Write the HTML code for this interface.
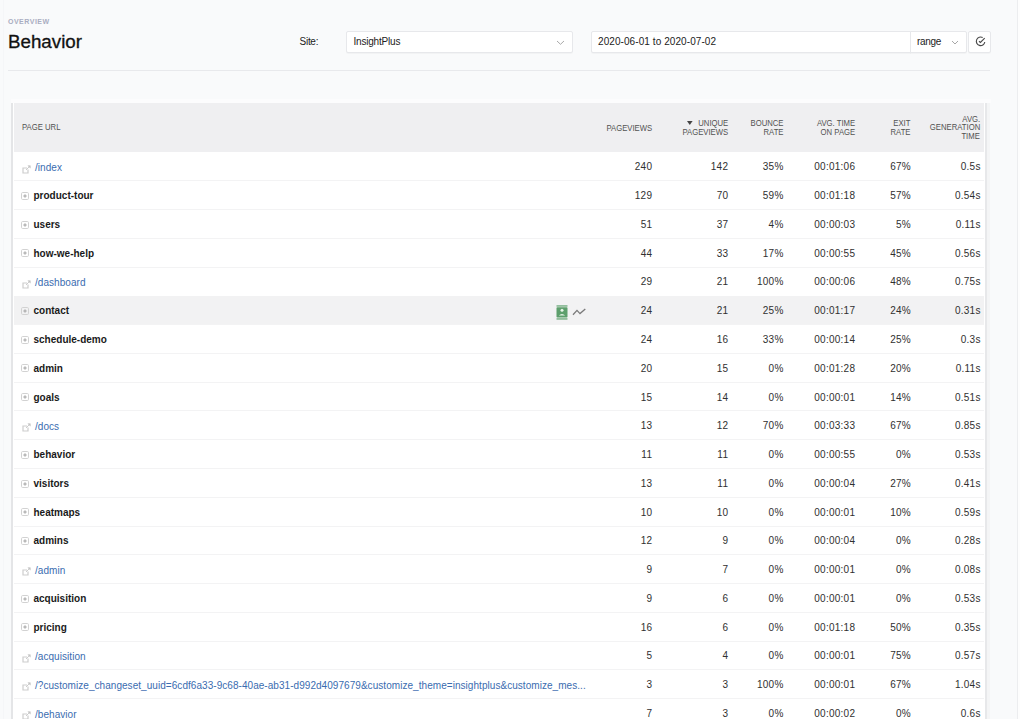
<!DOCTYPE html><html><head><meta charset="utf-8"><style>
*{margin:0;padding:0;box-sizing:border-box}
html,body{width:1020px;height:719px;overflow:hidden;background:#f9fafb;font-family:"Liberation Sans",sans-serif}
.t{position:absolute;white-space:nowrap}
.b{position:absolute}
</style></head><body>
<div class="b" style="left:3px;top:0;width:1px;height:719px;background:#f5f6f8"></div>
<div class="b" style="left:1017px;top:0;width:1px;height:719px;background:#ecedef"></div>
<div class="b" style="left:1018px;top:0;width:2px;height:719px;background:#fdfdfd"></div>
<div class="t" style="left:8.00px;top:18.00px;font-size:7px;line-height:8.40px;color:#a9adc1;font-weight:700;letter-spacing:0.5px;">OVERVIEW</div>
<div class="t" style="left:8.00px;top:31.00px;font-size:18.75px;line-height:22.50px;color:#111;font-weight:400;-webkit-text-stroke:0.3px #111;">Behavior</div>
<div class="t" style="left:299.60px;top:36.20px;font-size:10px;line-height:12.00px;color:#222;font-weight:400;letter-spacing:-0.3px;">Site:</div>
<div class="b" style="left:346px;top:31px;width:227px;height:21.5px;background:#fff;border:1px solid #e7e8eb;border-radius:2px;box-shadow:0 1px 1px rgba(0,0,0,0.03);"></div>
<div class="t" style="left:353.50px;top:36.20px;font-size:10px;line-height:12.00px;color:#222;font-weight:400;letter-spacing:-0.2px;">InsightPlus</div>
<svg class="b" style="left:555.8px;top:40.2px" width="9" height="5.3" viewBox="-1 -1 9 5.3"><path d="M0 0 L3.5 3.3 L7 0" fill="none" stroke="#a8a8a8" stroke-width="1"/></svg>
<div class="b" style="left:591px;top:31px;width:320px;height:21.5px;background:#fff;border:1px solid #e7e8eb;border-radius:2px;box-shadow:0 1px 1px rgba(0,0,0,0.03);border-radius:2px 0 0 2px"></div>
<div class="t" style="left:598.00px;top:36.20px;font-size:10px;line-height:12.00px;color:#222;font-weight:400;letter-spacing:0.08px;">2020-06-01 to 2020-07-02</div>
<div class="b" style="left:910px;top:31px;width:57px;height:21.5px;background:#fff;border:1px solid #e7e8eb;border-radius:2px;box-shadow:0 1px 1px rgba(0,0,0,0.03);border-radius:0 2px 2px 0"></div>
<div class="t" style="left:917.00px;top:36.20px;font-size:10px;line-height:12.00px;color:#222;font-weight:400;letter-spacing:-0.3px;">range</div>
<svg class="b" style="left:951px;top:40.4px" width="8" height="5" viewBox="-1 -1 8 5"><path d="M0 0 L3.0 3 L6 0" fill="none" stroke="#a8a8a8" stroke-width="1"/></svg>
<div class="b" style="left:967.5px;top:31px;width:23.5px;height:21.5px;background:#fff;border:1px solid #e7e8eb;border-radius:2px;box-shadow:0 1px 1px rgba(0,0,0,0.03);"></div>
<svg class="b" style="left:974.6px;top:36px" width="11" height="11" viewBox="0 0 11 11"><path d="M9.8 6.0 A4.25 4.25 0 1 1 7.7 1.6" fill="none" stroke="#4a4a4a" stroke-width="1.15"/><path d="M4.0 5.2 L5.4 6.4 L9.7 2.05" fill="none" stroke="#4a4a4a" stroke-width="1.15"/></svg>
<div class="b" style="left:8px;top:70px;width:982px;height:1px;background:#e8e9ec"></div>
<div class="b" style="left:11px;top:99px;width:979.5px;height:4px;background:#fcfcfd"></div>
<div class="b" style="left:11px;top:102.5px;width:976.5px;height:616.5px;background:#fff"></div>
<div class="b" style="left:11px;top:102.5px;width:2px;height:616.5px;background:#e4e5e7"></div>
<div class="b" style="left:985px;top:102.5px;width:2px;height:616.5px;background:#e7e8ea"></div>
<div class="b" style="left:987px;top:102.5px;width:3px;height:616.5px;background:#f4f5f6"></div>
<div class="b" style="left:14px;top:102.5px;width:970px;height:49.5px;background:#efeff1"></div>
<div class="t" style="left:22.20px;top:123.40px;font-size:8.3px;line-height:9.96px;color:#525252;font-weight:400;transform:scaleX(0.93);transform-origin:0 0;">PAGE URL</div>
<div class="t" style="right:368.00px;text-align:right;top:123.70px;font-size:8.3px;line-height:9.96px;color:#525252;font-weight:400;transform:scaleX(0.93);transform-origin:100% 0;">PAGEVIEWS</div>
<div class="t" style="right:292.00px;text-align:right;top:119.20px;font-size:8.3px;line-height:9.96px;color:#525252;font-weight:400;transform:scaleX(0.93);transform-origin:100% 0;">UNIQUE</div>
<div class="t" style="right:292.00px;text-align:right;top:127.80px;font-size:8.3px;line-height:9.96px;color:#525252;font-weight:400;transform:scaleX(0.93);transform-origin:100% 0;">PAGEVIEWS</div>
<svg class="b" style="left:686.8px;top:121px" width="6" height="5" viewBox="0 0 6 5"><path d="M0 0 L5.6 0 L2.8 3.9 Z" fill="#444"/></svg>
<div class="t" style="right:236.70px;text-align:right;top:119.20px;font-size:8.3px;line-height:9.96px;color:#525252;font-weight:400;transform:scaleX(0.93);transform-origin:100% 0;">BOUNCE</div>
<div class="t" style="right:236.70px;text-align:right;top:127.80px;font-size:8.3px;line-height:9.96px;color:#525252;font-weight:400;transform:scaleX(0.93);transform-origin:100% 0;">RATE</div>
<div class="t" style="right:165.00px;text-align:right;top:119.40px;font-size:8.3px;line-height:9.96px;color:#525252;font-weight:400;transform:scaleX(0.93);transform-origin:100% 0;">AVG. TIME</div>
<div class="t" style="right:165.00px;text-align:right;top:127.80px;font-size:8.3px;line-height:9.96px;color:#525252;font-weight:400;transform:scaleX(0.93);transform-origin:100% 0;">ON PAGE</div>
<div class="t" style="right:109.50px;text-align:right;top:119.40px;font-size:8.3px;line-height:9.96px;color:#525252;font-weight:400;transform:scaleX(0.93);transform-origin:100% 0;">EXIT</div>
<div class="t" style="right:109.50px;text-align:right;top:127.80px;font-size:8.3px;line-height:9.96px;color:#525252;font-weight:400;transform:scaleX(0.93);transform-origin:100% 0;">RATE</div>
<div class="t" style="right:39.80px;text-align:right;top:114.80px;font-size:8.3px;line-height:9.96px;color:#525252;font-weight:400;transform:scaleX(0.93);transform-origin:100% 0;">AVG.</div>
<div class="t" style="right:39.80px;text-align:right;top:123.30px;font-size:8.3px;line-height:9.96px;color:#525252;font-weight:400;transform:scaleX(0.93);transform-origin:100% 0;">GENERATION</div>
<div class="t" style="right:39.80px;text-align:right;top:131.90px;font-size:8.3px;line-height:9.96px;color:#525252;font-weight:400;transform:scaleX(0.93);transform-origin:100% 0;">TIME</div>
<svg class="b" style="left:22px;top:164.5px" width="9" height="9" viewBox="0 0 9 9"><path d="M5 3 H1 V8 H6 V4.5" fill="none" stroke="#cdcdcd" stroke-width="1.2"/><path d="M5.5 0.5 H8.5 V3.5 Z" fill="#b5b5b5"/><path d="M4 5 L7.6 1.4" stroke="#cdcdcd" stroke-width="1"/></svg>
<div class="t" style="left:35.00px;top:162.00px;font-size:10px;line-height:12.00px;color:#3a6cb0;font-weight:400;letter-spacing:0.05px;">/index</div>
<div class="t" style="right:367.75px;text-align:right;top:161.40px;font-size:10px;line-height:12.00px;color:#303030;font-weight:400;letter-spacing:0.25px;">240</div>
<div class="t" style="right:291.75px;text-align:right;top:161.40px;font-size:10px;line-height:12.00px;color:#303030;font-weight:400;letter-spacing:0.25px;">142</div>
<div class="t" style="right:236.45px;text-align:right;top:161.40px;font-size:10px;line-height:12.00px;color:#303030;font-weight:400;letter-spacing:0.25px;">35%</div>
<div class="t" style="right:164.75px;text-align:right;top:161.40px;font-size:10px;line-height:12.00px;color:#303030;font-weight:400;letter-spacing:0.25px;">00:01:06</div>
<div class="t" style="right:109.05px;text-align:right;top:161.40px;font-size:10px;line-height:12.00px;color:#303030;font-weight:400;letter-spacing:0.25px;">67%</div>
<div class="t" style="right:39.35px;text-align:right;top:161.40px;font-size:10px;line-height:12.00px;color:#303030;font-weight:400;letter-spacing:0.25px;">0.5s</div>
<div class="b" style="left:14px;top:180.27px;width:970px;height:1px;background:#f3f3f4"></div>
<svg class="b" style="left:21.3px;top:191.87px" width="8" height="8" viewBox="0 0 8 8"><rect x="0.5" y="0.5" width="7" height="7" rx="1.2" fill="none" stroke="#d2d2d2" stroke-width="1"/><path d="M4 2 V6 M2 4 H6" stroke="#b0b0b0" stroke-width="0.8"/><circle cx="4" cy="4" r="0.7" fill="#999"/></svg>
<div class="t" style="left:33.50px;top:190.17px;font-size:10px;line-height:12.00px;color:#1a1a1a;font-weight:700;">product-tour</div>
<div class="t" style="right:367.75px;text-align:right;top:190.17px;font-size:10px;line-height:12.00px;color:#303030;font-weight:400;letter-spacing:0.25px;">129</div>
<div class="t" style="right:291.75px;text-align:right;top:190.17px;font-size:10px;line-height:12.00px;color:#303030;font-weight:400;letter-spacing:0.25px;">70</div>
<div class="t" style="right:236.45px;text-align:right;top:190.17px;font-size:10px;line-height:12.00px;color:#303030;font-weight:400;letter-spacing:0.25px;">59%</div>
<div class="t" style="right:164.75px;text-align:right;top:190.17px;font-size:10px;line-height:12.00px;color:#303030;font-weight:400;letter-spacing:0.25px;">00:01:18</div>
<div class="t" style="right:109.05px;text-align:right;top:190.17px;font-size:10px;line-height:12.00px;color:#303030;font-weight:400;letter-spacing:0.25px;">57%</div>
<div class="t" style="right:39.35px;text-align:right;top:190.17px;font-size:10px;line-height:12.00px;color:#303030;font-weight:400;letter-spacing:0.25px;">0.54s</div>
<div class="b" style="left:14px;top:209.04px;width:970px;height:1px;background:#f3f3f4"></div>
<svg class="b" style="left:21.3px;top:220.64px" width="8" height="8" viewBox="0 0 8 8"><rect x="0.5" y="0.5" width="7" height="7" rx="1.2" fill="none" stroke="#d2d2d2" stroke-width="1"/><path d="M4 2 V6 M2 4 H6" stroke="#b0b0b0" stroke-width="0.8"/><circle cx="4" cy="4" r="0.7" fill="#999"/></svg>
<div class="t" style="left:33.50px;top:218.94px;font-size:10px;line-height:12.00px;color:#1a1a1a;font-weight:700;">users</div>
<div class="t" style="right:367.75px;text-align:right;top:218.94px;font-size:10px;line-height:12.00px;color:#303030;font-weight:400;letter-spacing:0.25px;">51</div>
<div class="t" style="right:291.75px;text-align:right;top:218.94px;font-size:10px;line-height:12.00px;color:#303030;font-weight:400;letter-spacing:0.25px;">37</div>
<div class="t" style="right:236.45px;text-align:right;top:218.94px;font-size:10px;line-height:12.00px;color:#303030;font-weight:400;letter-spacing:0.25px;">4%</div>
<div class="t" style="right:164.75px;text-align:right;top:218.94px;font-size:10px;line-height:12.00px;color:#303030;font-weight:400;letter-spacing:0.25px;">00:00:03</div>
<div class="t" style="right:109.05px;text-align:right;top:218.94px;font-size:10px;line-height:12.00px;color:#303030;font-weight:400;letter-spacing:0.25px;">5%</div>
<div class="t" style="right:39.35px;text-align:right;top:218.94px;font-size:10px;line-height:12.00px;color:#303030;font-weight:400;letter-spacing:0.25px;">0.11s</div>
<div class="b" style="left:14px;top:237.81px;width:970px;height:1px;background:#f3f3f4"></div>
<svg class="b" style="left:21.3px;top:249.41px" width="8" height="8" viewBox="0 0 8 8"><rect x="0.5" y="0.5" width="7" height="7" rx="1.2" fill="none" stroke="#d2d2d2" stroke-width="1"/><path d="M4 2 V6 M2 4 H6" stroke="#b0b0b0" stroke-width="0.8"/><circle cx="4" cy="4" r="0.7" fill="#999"/></svg>
<div class="t" style="left:33.50px;top:247.71px;font-size:10px;line-height:12.00px;color:#1a1a1a;font-weight:700;">how-we-help</div>
<div class="t" style="right:367.75px;text-align:right;top:247.71px;font-size:10px;line-height:12.00px;color:#303030;font-weight:400;letter-spacing:0.25px;">44</div>
<div class="t" style="right:291.75px;text-align:right;top:247.71px;font-size:10px;line-height:12.00px;color:#303030;font-weight:400;letter-spacing:0.25px;">33</div>
<div class="t" style="right:236.45px;text-align:right;top:247.71px;font-size:10px;line-height:12.00px;color:#303030;font-weight:400;letter-spacing:0.25px;">17%</div>
<div class="t" style="right:164.75px;text-align:right;top:247.71px;font-size:10px;line-height:12.00px;color:#303030;font-weight:400;letter-spacing:0.25px;">00:00:55</div>
<div class="t" style="right:109.05px;text-align:right;top:247.71px;font-size:10px;line-height:12.00px;color:#303030;font-weight:400;letter-spacing:0.25px;">45%</div>
<div class="t" style="right:39.35px;text-align:right;top:247.71px;font-size:10px;line-height:12.00px;color:#303030;font-weight:400;letter-spacing:0.25px;">0.56s</div>
<div class="b" style="left:14px;top:266.58px;width:970px;height:1px;background:#f3f3f4"></div>
<svg class="b" style="left:22px;top:279.58px" width="9" height="9" viewBox="0 0 9 9"><path d="M5 3 H1 V8 H6 V4.5" fill="none" stroke="#cdcdcd" stroke-width="1.2"/><path d="M5.5 0.5 H8.5 V3.5 Z" fill="#b5b5b5"/><path d="M4 5 L7.6 1.4" stroke="#cdcdcd" stroke-width="1"/></svg>
<div class="t" style="left:35.00px;top:277.08px;font-size:10px;line-height:12.00px;color:#3a6cb0;font-weight:400;letter-spacing:0.05px;">/dashboard</div>
<div class="t" style="right:367.75px;text-align:right;top:276.48px;font-size:10px;line-height:12.00px;color:#303030;font-weight:400;letter-spacing:0.25px;">29</div>
<div class="t" style="right:291.75px;text-align:right;top:276.48px;font-size:10px;line-height:12.00px;color:#303030;font-weight:400;letter-spacing:0.25px;">21</div>
<div class="t" style="right:236.45px;text-align:right;top:276.48px;font-size:10px;line-height:12.00px;color:#303030;font-weight:400;letter-spacing:0.25px;">100%</div>
<div class="t" style="right:164.75px;text-align:right;top:276.48px;font-size:10px;line-height:12.00px;color:#303030;font-weight:400;letter-spacing:0.25px;">00:00:06</div>
<div class="t" style="right:109.05px;text-align:right;top:276.48px;font-size:10px;line-height:12.00px;color:#303030;font-weight:400;letter-spacing:0.25px;">48%</div>
<div class="t" style="right:39.35px;text-align:right;top:276.48px;font-size:10px;line-height:12.00px;color:#303030;font-weight:400;letter-spacing:0.25px;">0.75s</div>
<div class="b" style="left:14px;top:295.85px;width:970px;height:28.77px;background:#f2f2f3"></div>
<svg class="b" style="left:21.3px;top:306.95000000000005px" width="8" height="8" viewBox="0 0 8 8"><rect x="0.5" y="0.5" width="7" height="7" rx="1.2" fill="none" stroke="#d2d2d2" stroke-width="1"/><path d="M4 2 V6 M2 4 H6" stroke="#b0b0b0" stroke-width="0.8"/><circle cx="4" cy="4" r="0.7" fill="#999"/></svg>
<div class="t" style="left:33.50px;top:305.25px;font-size:10px;line-height:12.00px;color:#1a1a1a;font-weight:700;">contact</div>
<div class="t" style="right:367.75px;text-align:right;top:305.25px;font-size:10px;line-height:12.00px;color:#303030;font-weight:400;letter-spacing:0.25px;">24</div>
<div class="t" style="right:291.75px;text-align:right;top:305.25px;font-size:10px;line-height:12.00px;color:#303030;font-weight:400;letter-spacing:0.25px;">21</div>
<div class="t" style="right:236.45px;text-align:right;top:305.25px;font-size:10px;line-height:12.00px;color:#303030;font-weight:400;letter-spacing:0.25px;">25%</div>
<div class="t" style="right:164.75px;text-align:right;top:305.25px;font-size:10px;line-height:12.00px;color:#303030;font-weight:400;letter-spacing:0.25px;">00:01:17</div>
<div class="t" style="right:109.05px;text-align:right;top:305.25px;font-size:10px;line-height:12.00px;color:#303030;font-weight:400;letter-spacing:0.25px;">24%</div>
<div class="t" style="right:39.35px;text-align:right;top:305.25px;font-size:10px;line-height:12.00px;color:#303030;font-weight:400;letter-spacing:0.25px;">0.31s</div>
<div class="b" style="left:14px;top:324.12px;width:970px;height:1px;background:#f3f3f4"></div>
<svg class="b" style="left:21.3px;top:335.72px" width="8" height="8" viewBox="0 0 8 8"><rect x="0.5" y="0.5" width="7" height="7" rx="1.2" fill="none" stroke="#d2d2d2" stroke-width="1"/><path d="M4 2 V6 M2 4 H6" stroke="#b0b0b0" stroke-width="0.8"/><circle cx="4" cy="4" r="0.7" fill="#999"/></svg>
<div class="t" style="left:33.50px;top:334.02px;font-size:10px;line-height:12.00px;color:#1a1a1a;font-weight:700;">schedule-demo</div>
<div class="t" style="right:367.75px;text-align:right;top:334.02px;font-size:10px;line-height:12.00px;color:#303030;font-weight:400;letter-spacing:0.25px;">24</div>
<div class="t" style="right:291.75px;text-align:right;top:334.02px;font-size:10px;line-height:12.00px;color:#303030;font-weight:400;letter-spacing:0.25px;">16</div>
<div class="t" style="right:236.45px;text-align:right;top:334.02px;font-size:10px;line-height:12.00px;color:#303030;font-weight:400;letter-spacing:0.25px;">33%</div>
<div class="t" style="right:164.75px;text-align:right;top:334.02px;font-size:10px;line-height:12.00px;color:#303030;font-weight:400;letter-spacing:0.25px;">00:00:14</div>
<div class="t" style="right:109.05px;text-align:right;top:334.02px;font-size:10px;line-height:12.00px;color:#303030;font-weight:400;letter-spacing:0.25px;">25%</div>
<div class="t" style="right:39.35px;text-align:right;top:334.02px;font-size:10px;line-height:12.00px;color:#303030;font-weight:400;letter-spacing:0.25px;">0.3s</div>
<div class="b" style="left:14px;top:352.89px;width:970px;height:1px;background:#f3f3f4"></div>
<svg class="b" style="left:21.3px;top:364.49px" width="8" height="8" viewBox="0 0 8 8"><rect x="0.5" y="0.5" width="7" height="7" rx="1.2" fill="none" stroke="#d2d2d2" stroke-width="1"/><path d="M4 2 V6 M2 4 H6" stroke="#b0b0b0" stroke-width="0.8"/><circle cx="4" cy="4" r="0.7" fill="#999"/></svg>
<div class="t" style="left:33.50px;top:362.79px;font-size:10px;line-height:12.00px;color:#1a1a1a;font-weight:700;">admin</div>
<div class="t" style="right:367.75px;text-align:right;top:362.79px;font-size:10px;line-height:12.00px;color:#303030;font-weight:400;letter-spacing:0.25px;">20</div>
<div class="t" style="right:291.75px;text-align:right;top:362.79px;font-size:10px;line-height:12.00px;color:#303030;font-weight:400;letter-spacing:0.25px;">15</div>
<div class="t" style="right:236.45px;text-align:right;top:362.79px;font-size:10px;line-height:12.00px;color:#303030;font-weight:400;letter-spacing:0.25px;">0%</div>
<div class="t" style="right:164.75px;text-align:right;top:362.79px;font-size:10px;line-height:12.00px;color:#303030;font-weight:400;letter-spacing:0.25px;">00:01:28</div>
<div class="t" style="right:109.05px;text-align:right;top:362.79px;font-size:10px;line-height:12.00px;color:#303030;font-weight:400;letter-spacing:0.25px;">20%</div>
<div class="t" style="right:39.35px;text-align:right;top:362.79px;font-size:10px;line-height:12.00px;color:#303030;font-weight:400;letter-spacing:0.25px;">0.11s</div>
<div class="b" style="left:14px;top:381.66px;width:970px;height:1px;background:#f3f3f4"></div>
<svg class="b" style="left:21.3px;top:393.26px" width="8" height="8" viewBox="0 0 8 8"><rect x="0.5" y="0.5" width="7" height="7" rx="1.2" fill="none" stroke="#d2d2d2" stroke-width="1"/><path d="M4 2 V6 M2 4 H6" stroke="#b0b0b0" stroke-width="0.8"/><circle cx="4" cy="4" r="0.7" fill="#999"/></svg>
<div class="t" style="left:33.50px;top:391.56px;font-size:10px;line-height:12.00px;color:#1a1a1a;font-weight:700;">goals</div>
<div class="t" style="right:367.75px;text-align:right;top:391.56px;font-size:10px;line-height:12.00px;color:#303030;font-weight:400;letter-spacing:0.25px;">15</div>
<div class="t" style="right:291.75px;text-align:right;top:391.56px;font-size:10px;line-height:12.00px;color:#303030;font-weight:400;letter-spacing:0.25px;">14</div>
<div class="t" style="right:236.45px;text-align:right;top:391.56px;font-size:10px;line-height:12.00px;color:#303030;font-weight:400;letter-spacing:0.25px;">0%</div>
<div class="t" style="right:164.75px;text-align:right;top:391.56px;font-size:10px;line-height:12.00px;color:#303030;font-weight:400;letter-spacing:0.25px;">00:00:01</div>
<div class="t" style="right:109.05px;text-align:right;top:391.56px;font-size:10px;line-height:12.00px;color:#303030;font-weight:400;letter-spacing:0.25px;">14%</div>
<div class="t" style="right:39.35px;text-align:right;top:391.56px;font-size:10px;line-height:12.00px;color:#303030;font-weight:400;letter-spacing:0.25px;">0.51s</div>
<div class="b" style="left:14px;top:410.43px;width:970px;height:1px;background:#f3f3f4"></div>
<svg class="b" style="left:22px;top:423.43px" width="9" height="9" viewBox="0 0 9 9"><path d="M5 3 H1 V8 H6 V4.5" fill="none" stroke="#cdcdcd" stroke-width="1.2"/><path d="M5.5 0.5 H8.5 V3.5 Z" fill="#b5b5b5"/><path d="M4 5 L7.6 1.4" stroke="#cdcdcd" stroke-width="1"/></svg>
<div class="t" style="left:35.00px;top:420.93px;font-size:10px;line-height:12.00px;color:#3a6cb0;font-weight:400;letter-spacing:0.05px;">/docs</div>
<div class="t" style="right:367.75px;text-align:right;top:420.33px;font-size:10px;line-height:12.00px;color:#303030;font-weight:400;letter-spacing:0.25px;">13</div>
<div class="t" style="right:291.75px;text-align:right;top:420.33px;font-size:10px;line-height:12.00px;color:#303030;font-weight:400;letter-spacing:0.25px;">12</div>
<div class="t" style="right:236.45px;text-align:right;top:420.33px;font-size:10px;line-height:12.00px;color:#303030;font-weight:400;letter-spacing:0.25px;">70%</div>
<div class="t" style="right:164.75px;text-align:right;top:420.33px;font-size:10px;line-height:12.00px;color:#303030;font-weight:400;letter-spacing:0.25px;">00:03:33</div>
<div class="t" style="right:109.05px;text-align:right;top:420.33px;font-size:10px;line-height:12.00px;color:#303030;font-weight:400;letter-spacing:0.25px;">67%</div>
<div class="t" style="right:39.35px;text-align:right;top:420.33px;font-size:10px;line-height:12.00px;color:#303030;font-weight:400;letter-spacing:0.25px;">0.85s</div>
<div class="b" style="left:14px;top:439.20px;width:970px;height:1px;background:#f3f3f4"></div>
<svg class="b" style="left:21.3px;top:450.8px" width="8" height="8" viewBox="0 0 8 8"><rect x="0.5" y="0.5" width="7" height="7" rx="1.2" fill="none" stroke="#d2d2d2" stroke-width="1"/><path d="M4 2 V6 M2 4 H6" stroke="#b0b0b0" stroke-width="0.8"/><circle cx="4" cy="4" r="0.7" fill="#999"/></svg>
<div class="t" style="left:33.50px;top:449.10px;font-size:10px;line-height:12.00px;color:#1a1a1a;font-weight:700;">behavior</div>
<div class="t" style="right:367.75px;text-align:right;top:449.10px;font-size:10px;line-height:12.00px;color:#303030;font-weight:400;letter-spacing:0.25px;">11</div>
<div class="t" style="right:291.75px;text-align:right;top:449.10px;font-size:10px;line-height:12.00px;color:#303030;font-weight:400;letter-spacing:0.25px;">11</div>
<div class="t" style="right:236.45px;text-align:right;top:449.10px;font-size:10px;line-height:12.00px;color:#303030;font-weight:400;letter-spacing:0.25px;">0%</div>
<div class="t" style="right:164.75px;text-align:right;top:449.10px;font-size:10px;line-height:12.00px;color:#303030;font-weight:400;letter-spacing:0.25px;">00:00:55</div>
<div class="t" style="right:109.05px;text-align:right;top:449.10px;font-size:10px;line-height:12.00px;color:#303030;font-weight:400;letter-spacing:0.25px;">0%</div>
<div class="t" style="right:39.35px;text-align:right;top:449.10px;font-size:10px;line-height:12.00px;color:#303030;font-weight:400;letter-spacing:0.25px;">0.53s</div>
<div class="b" style="left:14px;top:467.97px;width:970px;height:1px;background:#f3f3f4"></div>
<svg class="b" style="left:21.3px;top:479.57px" width="8" height="8" viewBox="0 0 8 8"><rect x="0.5" y="0.5" width="7" height="7" rx="1.2" fill="none" stroke="#d2d2d2" stroke-width="1"/><path d="M4 2 V6 M2 4 H6" stroke="#b0b0b0" stroke-width="0.8"/><circle cx="4" cy="4" r="0.7" fill="#999"/></svg>
<div class="t" style="left:33.50px;top:477.87px;font-size:10px;line-height:12.00px;color:#1a1a1a;font-weight:700;">visitors</div>
<div class="t" style="right:367.75px;text-align:right;top:477.87px;font-size:10px;line-height:12.00px;color:#303030;font-weight:400;letter-spacing:0.25px;">13</div>
<div class="t" style="right:291.75px;text-align:right;top:477.87px;font-size:10px;line-height:12.00px;color:#303030;font-weight:400;letter-spacing:0.25px;">11</div>
<div class="t" style="right:236.45px;text-align:right;top:477.87px;font-size:10px;line-height:12.00px;color:#303030;font-weight:400;letter-spacing:0.25px;">0%</div>
<div class="t" style="right:164.75px;text-align:right;top:477.87px;font-size:10px;line-height:12.00px;color:#303030;font-weight:400;letter-spacing:0.25px;">00:00:04</div>
<div class="t" style="right:109.05px;text-align:right;top:477.87px;font-size:10px;line-height:12.00px;color:#303030;font-weight:400;letter-spacing:0.25px;">27%</div>
<div class="t" style="right:39.35px;text-align:right;top:477.87px;font-size:10px;line-height:12.00px;color:#303030;font-weight:400;letter-spacing:0.25px;">0.41s</div>
<div class="b" style="left:14px;top:496.74px;width:970px;height:1px;background:#f3f3f4"></div>
<svg class="b" style="left:21.3px;top:508.34000000000003px" width="8" height="8" viewBox="0 0 8 8"><rect x="0.5" y="0.5" width="7" height="7" rx="1.2" fill="none" stroke="#d2d2d2" stroke-width="1"/><path d="M4 2 V6 M2 4 H6" stroke="#b0b0b0" stroke-width="0.8"/><circle cx="4" cy="4" r="0.7" fill="#999"/></svg>
<div class="t" style="left:33.50px;top:506.64px;font-size:10px;line-height:12.00px;color:#1a1a1a;font-weight:700;">heatmaps</div>
<div class="t" style="right:367.75px;text-align:right;top:506.64px;font-size:10px;line-height:12.00px;color:#303030;font-weight:400;letter-spacing:0.25px;">10</div>
<div class="t" style="right:291.75px;text-align:right;top:506.64px;font-size:10px;line-height:12.00px;color:#303030;font-weight:400;letter-spacing:0.25px;">10</div>
<div class="t" style="right:236.45px;text-align:right;top:506.64px;font-size:10px;line-height:12.00px;color:#303030;font-weight:400;letter-spacing:0.25px;">0%</div>
<div class="t" style="right:164.75px;text-align:right;top:506.64px;font-size:10px;line-height:12.00px;color:#303030;font-weight:400;letter-spacing:0.25px;">00:00:01</div>
<div class="t" style="right:109.05px;text-align:right;top:506.64px;font-size:10px;line-height:12.00px;color:#303030;font-weight:400;letter-spacing:0.25px;">10%</div>
<div class="t" style="right:39.35px;text-align:right;top:506.64px;font-size:10px;line-height:12.00px;color:#303030;font-weight:400;letter-spacing:0.25px;">0.59s</div>
<div class="b" style="left:14px;top:525.51px;width:970px;height:1px;background:#f3f3f4"></div>
<svg class="b" style="left:21.3px;top:537.11px" width="8" height="8" viewBox="0 0 8 8"><rect x="0.5" y="0.5" width="7" height="7" rx="1.2" fill="none" stroke="#d2d2d2" stroke-width="1"/><path d="M4 2 V6 M2 4 H6" stroke="#b0b0b0" stroke-width="0.8"/><circle cx="4" cy="4" r="0.7" fill="#999"/></svg>
<div class="t" style="left:33.50px;top:535.41px;font-size:10px;line-height:12.00px;color:#1a1a1a;font-weight:700;">admins</div>
<div class="t" style="right:367.75px;text-align:right;top:535.41px;font-size:10px;line-height:12.00px;color:#303030;font-weight:400;letter-spacing:0.25px;">12</div>
<div class="t" style="right:291.75px;text-align:right;top:535.41px;font-size:10px;line-height:12.00px;color:#303030;font-weight:400;letter-spacing:0.25px;">9</div>
<div class="t" style="right:236.45px;text-align:right;top:535.41px;font-size:10px;line-height:12.00px;color:#303030;font-weight:400;letter-spacing:0.25px;">0%</div>
<div class="t" style="right:164.75px;text-align:right;top:535.41px;font-size:10px;line-height:12.00px;color:#303030;font-weight:400;letter-spacing:0.25px;">00:00:04</div>
<div class="t" style="right:109.05px;text-align:right;top:535.41px;font-size:10px;line-height:12.00px;color:#303030;font-weight:400;letter-spacing:0.25px;">0%</div>
<div class="t" style="right:39.35px;text-align:right;top:535.41px;font-size:10px;line-height:12.00px;color:#303030;font-weight:400;letter-spacing:0.25px;">0.28s</div>
<div class="b" style="left:14px;top:554.28px;width:970px;height:1px;background:#f3f3f4"></div>
<svg class="b" style="left:22px;top:567.28px" width="9" height="9" viewBox="0 0 9 9"><path d="M5 3 H1 V8 H6 V4.5" fill="none" stroke="#cdcdcd" stroke-width="1.2"/><path d="M5.5 0.5 H8.5 V3.5 Z" fill="#b5b5b5"/><path d="M4 5 L7.6 1.4" stroke="#cdcdcd" stroke-width="1"/></svg>
<div class="t" style="left:35.00px;top:564.78px;font-size:10px;line-height:12.00px;color:#3a6cb0;font-weight:400;letter-spacing:0.05px;">/admin</div>
<div class="t" style="right:367.75px;text-align:right;top:564.18px;font-size:10px;line-height:12.00px;color:#303030;font-weight:400;letter-spacing:0.25px;">9</div>
<div class="t" style="right:291.75px;text-align:right;top:564.18px;font-size:10px;line-height:12.00px;color:#303030;font-weight:400;letter-spacing:0.25px;">7</div>
<div class="t" style="right:236.45px;text-align:right;top:564.18px;font-size:10px;line-height:12.00px;color:#303030;font-weight:400;letter-spacing:0.25px;">0%</div>
<div class="t" style="right:164.75px;text-align:right;top:564.18px;font-size:10px;line-height:12.00px;color:#303030;font-weight:400;letter-spacing:0.25px;">00:00:01</div>
<div class="t" style="right:109.05px;text-align:right;top:564.18px;font-size:10px;line-height:12.00px;color:#303030;font-weight:400;letter-spacing:0.25px;">0%</div>
<div class="t" style="right:39.35px;text-align:right;top:564.18px;font-size:10px;line-height:12.00px;color:#303030;font-weight:400;letter-spacing:0.25px;">0.08s</div>
<div class="b" style="left:14px;top:583.05px;width:970px;height:1px;background:#f3f3f4"></div>
<svg class="b" style="left:21.3px;top:594.65px" width="8" height="8" viewBox="0 0 8 8"><rect x="0.5" y="0.5" width="7" height="7" rx="1.2" fill="none" stroke="#d2d2d2" stroke-width="1"/><path d="M4 2 V6 M2 4 H6" stroke="#b0b0b0" stroke-width="0.8"/><circle cx="4" cy="4" r="0.7" fill="#999"/></svg>
<div class="t" style="left:33.50px;top:592.95px;font-size:10px;line-height:12.00px;color:#1a1a1a;font-weight:700;">acquisition</div>
<div class="t" style="right:367.75px;text-align:right;top:592.95px;font-size:10px;line-height:12.00px;color:#303030;font-weight:400;letter-spacing:0.25px;">9</div>
<div class="t" style="right:291.75px;text-align:right;top:592.95px;font-size:10px;line-height:12.00px;color:#303030;font-weight:400;letter-spacing:0.25px;">6</div>
<div class="t" style="right:236.45px;text-align:right;top:592.95px;font-size:10px;line-height:12.00px;color:#303030;font-weight:400;letter-spacing:0.25px;">0%</div>
<div class="t" style="right:164.75px;text-align:right;top:592.95px;font-size:10px;line-height:12.00px;color:#303030;font-weight:400;letter-spacing:0.25px;">00:00:01</div>
<div class="t" style="right:109.05px;text-align:right;top:592.95px;font-size:10px;line-height:12.00px;color:#303030;font-weight:400;letter-spacing:0.25px;">0%</div>
<div class="t" style="right:39.35px;text-align:right;top:592.95px;font-size:10px;line-height:12.00px;color:#303030;font-weight:400;letter-spacing:0.25px;">0.53s</div>
<div class="b" style="left:14px;top:611.82px;width:970px;height:1px;background:#f3f3f4"></div>
<svg class="b" style="left:21.3px;top:623.42px" width="8" height="8" viewBox="0 0 8 8"><rect x="0.5" y="0.5" width="7" height="7" rx="1.2" fill="none" stroke="#d2d2d2" stroke-width="1"/><path d="M4 2 V6 M2 4 H6" stroke="#b0b0b0" stroke-width="0.8"/><circle cx="4" cy="4" r="0.7" fill="#999"/></svg>
<div class="t" style="left:33.50px;top:621.72px;font-size:10px;line-height:12.00px;color:#1a1a1a;font-weight:700;">pricing</div>
<div class="t" style="right:367.75px;text-align:right;top:621.72px;font-size:10px;line-height:12.00px;color:#303030;font-weight:400;letter-spacing:0.25px;">16</div>
<div class="t" style="right:291.75px;text-align:right;top:621.72px;font-size:10px;line-height:12.00px;color:#303030;font-weight:400;letter-spacing:0.25px;">6</div>
<div class="t" style="right:236.45px;text-align:right;top:621.72px;font-size:10px;line-height:12.00px;color:#303030;font-weight:400;letter-spacing:0.25px;">0%</div>
<div class="t" style="right:164.75px;text-align:right;top:621.72px;font-size:10px;line-height:12.00px;color:#303030;font-weight:400;letter-spacing:0.25px;">00:01:18</div>
<div class="t" style="right:109.05px;text-align:right;top:621.72px;font-size:10px;line-height:12.00px;color:#303030;font-weight:400;letter-spacing:0.25px;">50%</div>
<div class="t" style="right:39.35px;text-align:right;top:621.72px;font-size:10px;line-height:12.00px;color:#303030;font-weight:400;letter-spacing:0.25px;">0.35s</div>
<div class="b" style="left:14px;top:640.59px;width:970px;height:1px;background:#f3f3f4"></div>
<svg class="b" style="left:22px;top:653.5899999999999px" width="9" height="9" viewBox="0 0 9 9"><path d="M5 3 H1 V8 H6 V4.5" fill="none" stroke="#cdcdcd" stroke-width="1.2"/><path d="M5.5 0.5 H8.5 V3.5 Z" fill="#b5b5b5"/><path d="M4 5 L7.6 1.4" stroke="#cdcdcd" stroke-width="1"/></svg>
<div class="t" style="left:35.00px;top:651.09px;font-size:10px;line-height:12.00px;color:#3a6cb0;font-weight:400;letter-spacing:0.05px;">/acquisition</div>
<div class="t" style="right:367.75px;text-align:right;top:650.49px;font-size:10px;line-height:12.00px;color:#303030;font-weight:400;letter-spacing:0.25px;">5</div>
<div class="t" style="right:291.75px;text-align:right;top:650.49px;font-size:10px;line-height:12.00px;color:#303030;font-weight:400;letter-spacing:0.25px;">4</div>
<div class="t" style="right:236.45px;text-align:right;top:650.49px;font-size:10px;line-height:12.00px;color:#303030;font-weight:400;letter-spacing:0.25px;">0%</div>
<div class="t" style="right:164.75px;text-align:right;top:650.49px;font-size:10px;line-height:12.00px;color:#303030;font-weight:400;letter-spacing:0.25px;">00:00:01</div>
<div class="t" style="right:109.05px;text-align:right;top:650.49px;font-size:10px;line-height:12.00px;color:#303030;font-weight:400;letter-spacing:0.25px;">75%</div>
<div class="t" style="right:39.35px;text-align:right;top:650.49px;font-size:10px;line-height:12.00px;color:#303030;font-weight:400;letter-spacing:0.25px;">0.57s</div>
<div class="b" style="left:14px;top:669.36px;width:970px;height:1px;background:#f3f3f4"></div>
<svg class="b" style="left:22px;top:682.36px" width="9" height="9" viewBox="0 0 9 9"><path d="M5 3 H1 V8 H6 V4.5" fill="none" stroke="#cdcdcd" stroke-width="1.2"/><path d="M5.5 0.5 H8.5 V3.5 Z" fill="#b5b5b5"/><path d="M4 5 L7.6 1.4" stroke="#cdcdcd" stroke-width="1"/></svg>
<div class="t" style="left:35.00px;top:679.86px;font-size:10px;line-height:12.00px;color:#3a6cb0;font-weight:400;letter-spacing:0.05px;">/?customize_changeset_uuid=6cdf6a33-9c68-40ae-ab31-d992d4097679&amp;customize_theme=insightplus&amp;customize_mes...</div>
<div class="t" style="right:367.75px;text-align:right;top:679.26px;font-size:10px;line-height:12.00px;color:#303030;font-weight:400;letter-spacing:0.25px;">3</div>
<div class="t" style="right:291.75px;text-align:right;top:679.26px;font-size:10px;line-height:12.00px;color:#303030;font-weight:400;letter-spacing:0.25px;">3</div>
<div class="t" style="right:236.45px;text-align:right;top:679.26px;font-size:10px;line-height:12.00px;color:#303030;font-weight:400;letter-spacing:0.25px;">100%</div>
<div class="t" style="right:164.75px;text-align:right;top:679.26px;font-size:10px;line-height:12.00px;color:#303030;font-weight:400;letter-spacing:0.25px;">00:00:01</div>
<div class="t" style="right:109.05px;text-align:right;top:679.26px;font-size:10px;line-height:12.00px;color:#303030;font-weight:400;letter-spacing:0.25px;">67%</div>
<div class="t" style="right:39.35px;text-align:right;top:679.26px;font-size:10px;line-height:12.00px;color:#303030;font-weight:400;letter-spacing:0.25px;">1.04s</div>
<div class="b" style="left:14px;top:698.13px;width:970px;height:1px;background:#f3f3f4"></div>
<svg class="b" style="left:22px;top:711.13px" width="9" height="9" viewBox="0 0 9 9"><path d="M5 3 H1 V8 H6 V4.5" fill="none" stroke="#cdcdcd" stroke-width="1.2"/><path d="M5.5 0.5 H8.5 V3.5 Z" fill="#b5b5b5"/><path d="M4 5 L7.6 1.4" stroke="#cdcdcd" stroke-width="1"/></svg>
<div class="t" style="left:35.00px;top:708.63px;font-size:10px;line-height:12.00px;color:#3a6cb0;font-weight:400;letter-spacing:0.05px;">/behavior</div>
<div class="t" style="right:367.75px;text-align:right;top:708.03px;font-size:10px;line-height:12.00px;color:#303030;font-weight:400;letter-spacing:0.25px;">7</div>
<div class="t" style="right:291.75px;text-align:right;top:708.03px;font-size:10px;line-height:12.00px;color:#303030;font-weight:400;letter-spacing:0.25px;">3</div>
<div class="t" style="right:236.45px;text-align:right;top:708.03px;font-size:10px;line-height:12.00px;color:#303030;font-weight:400;letter-spacing:0.25px;">0%</div>
<div class="t" style="right:164.75px;text-align:right;top:708.03px;font-size:10px;line-height:12.00px;color:#303030;font-weight:400;letter-spacing:0.25px;">00:00:02</div>
<div class="t" style="right:109.05px;text-align:right;top:708.03px;font-size:10px;line-height:12.00px;color:#303030;font-weight:400;letter-spacing:0.25px;">0%</div>
<div class="t" style="right:39.35px;text-align:right;top:708.03px;font-size:10px;line-height:12.00px;color:#303030;font-weight:400;letter-spacing:0.25px;">0.6s</div>
<svg class="b" style="left:556px;top:305.15px" width="12" height="15" viewBox="0 0 12 15"><rect x="0.5" y="0.3" width="11" height="1.3" fill="#6aa878"/><rect x="0.5" y="2.3" width="11" height="10.2" rx="0.8" fill="#5d9f6c"/><rect x="0.5" y="13.3" width="11" height="1.3" fill="#6aa878"/><circle cx="6" cy="5.3" r="1.5" fill="#e8f5ea"/><path d="M2.8 10.6 Q6 7.4 9.2 10.6 Z" fill="#e8f5ea"/></svg>
<svg class="b" style="left:571.5px;top:308.45px" width="15" height="8" viewBox="0 0 15 8"><path d="M1 6.8 L5 2.4 L8 5.6 L13.3 1" fill="none" stroke="#7a7a7a" stroke-width="1.3"/></svg>
</body></html>
